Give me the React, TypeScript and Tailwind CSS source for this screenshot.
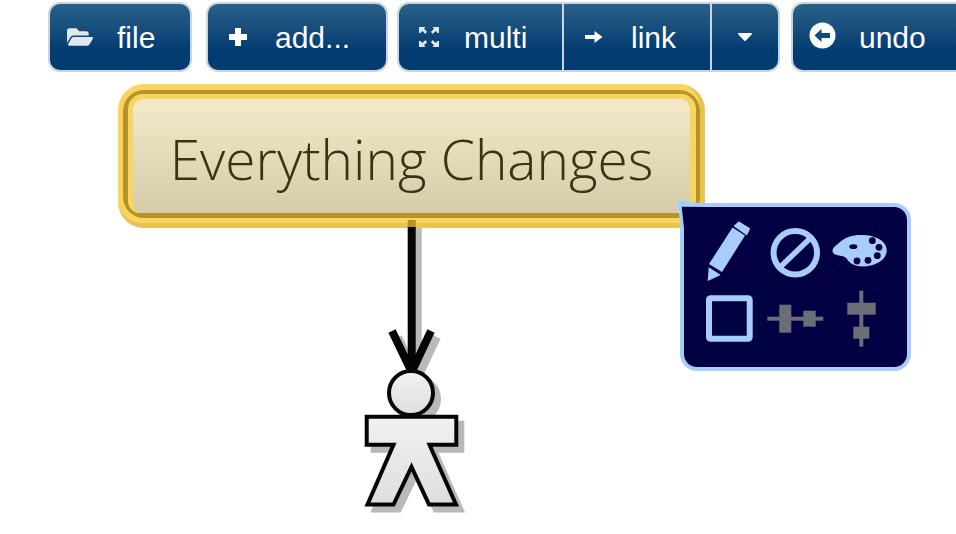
import { FaCaretDown, FaFolderOpen } from 'react-icons/fa';

const barClass =
  'h-[70px] shrink-0 flex rounded-[12px] border-2 border-[#c9d5e0] bg-gradient-to-b from-[#2a6188] to-[#033c71] to-70% text-white text-[30px] overflow-hidden';

function MultiIcon() {
  return (
    <svg width="20" height="20" viewBox="0 0 20 20" fill="#dfe8ee">
      <path d="M0 0h6.5L5 1.7 8 4.7 6.5 7 3.2 4 1.5 6H0z" />
      <path d="M20 0h-6.5L15 1.7 12 4.7 13.5 7 16.8 4 18.5 6H20z" />
      <path d="M0 20h6.5L5 18.3 8 15.3 6.5 13 3.2 16 1.5 14H0z" />
      <path d="M20 20h-6.5L15 18.3 12 15.3 13.5 13 16.8 16 18.5 14H20z" />
    </svg>
  );
}

function PlusIcon() {
  return (
    <svg width="18" height="18" viewBox="0 0 18 18" fill="#fff">
      <path d="M6 0H12V6H18V12H12V18H6V12H0V6H6Z" />
    </svg>
  );
}

function ArrowIcon() {
  return (
    <svg width="18" height="14" viewBox="0 0 18 14" fill="#fff">
      <path d="M0 5H9.5V1L17.5 7L9.5 13V9H0Z" />
    </svg>
  );
}

function UndoIcon() {
  return (
    <svg width="27" height="27" viewBox="0 0 27 27">
      <circle cx="13.5" cy="13.5" r="13" fill="#fff" />
      <path d="M5.5 13.5L12.5 7V11H21V16H12.5V20Z" fill="#0f4a7c" />
    </svg>
  );
}

function PersonShape({ fill, stroke, lineTop }: { fill: string; stroke: string; lineTop: number }) {
  return (
    <>
      <path d={`M46.7 ${lineTop}V144M27 103L46.7 144L66 103`} fill="none" stroke={stroke} strokeWidth="8" />
      <circle cx="46" cy="165" r="22" fill={fill} stroke={stroke} strokeWidth="4" />
      <path
        d="M1.7 188.7H91.3V216.7H64.5L91 276.5H64L46.5 239L28.5 276.5H2.5L28.5 216.7H1.7Z"
        fill={fill}
        stroke={stroke}
        strokeWidth="4"
      />
    </>
  );
}

function Person() {
  return (
    <svg className="absolute left-[365px] top-[228px] overflow-visible" width="100" height="290" viewBox="0 0 100 290">
      <defs>
        <linearGradient id="personFill" x1="0" y1="0" x2="0" y2="1">
          <stop offset="0" stopColor="#f1f1f1" />
          <stop offset="1" stopColor="#dedede" />
        </linearGradient>
      </defs>
      <g transform="translate(6 6)">
        <PersonShape fill="#b9b9b9" stroke="#b9b9b9" lineTop={-6} />
      </g>
      <rect x="42.7" y="-8" width="8" height="8" fill="#b69329" />
      <PersonShape fill="url(#personFill)" stroke="#050505" lineTop={-1} />
    </svg>
  );
}

function Popover() {
  return (
    <div className="absolute left-[680px] top-[203px] w-[231px] h-[168px] rounded-[17px] border-4 border-[#a9cdfb] bg-[#000042] p-3">
      <svg className="absolute left-[-7px] top-[-7px]" width="30" height="30" viewBox="0 0 30 30">
        <path d="M0.3 0L24 3.5V7H8V22H3Z" fill="#a9cdfb" />
        <path d="M4.7 6.7L30 7V30H7.2Z" fill="#000042" />
      </svg>
      <div className="relative grid grid-cols-[66px_66px_66px] grid-rows-[67px_66px]">
        <svg width="66" height="66" viewBox="0 0 66 66" fill="#a9cdfb">
          <path d="M11.7 62L12.7 48.3L24.7 56Z" />
          <path d="M13 45L36.5 8.5L49 16.5L26 53Z" />
          <path d="M39 7L43 3.5L53 9.8L50.5 15Z" stroke="#a9cdfb" strokeWidth="2" strokeLinejoin="round" />
        </svg>
        <svg width="66" height="66" viewBox="0 0 66 66" fill="none" stroke="#a9cdfb">
          <circle cx="33.3" cy="33.7" r="21.7" strokeWidth="6" />
          <path d="M49.7 17.7L17 49.3" strokeWidth="5.5" />
        </svg>
        <svg width="66" height="66" viewBox="0 0 66 66" fill="#a9cdfb">
          <path d="M4.5 31.5C5 28 9 26 12 23C17 18.5 24 16 33 16C48 16 58.7 22 58.7 31.5C58.7 41 47 47.5 35 47.5C27 47.5 21 44 19 40C17 37.5 15 37 11 36.5C8 36 4.5 35 4.5 31.5Z" />
          <g fill="#000042">
            <ellipse cx="25.3" cy="27.7" rx="4" ry="2.4" />
            <circle cx="44.3" cy="21.7" r="3.4" />
            <circle cx="51" cy="28.3" r="3.4" />
            <circle cx="49.3" cy="36.7" r="3.4" />
            <circle cx="40" cy="41.3" r="3.4" />
            <circle cx="29" cy="42" r="3.4" />
          </g>
        </svg>
        <svg width="66" height="66" viewBox="0 0 66 66" fill="none" stroke="#a9cdfb">
          <rect x="13" y="12.3" width="40.7" height="40.4" rx="1.5" strokeWidth="6" />
        </svg>
        <svg width="66" height="66" viewBox="0 0 66 66" fill="#6d6d77">
          <rect x="5.3" y="30.7" width="56" height="4" />
          <rect x="17.3" y="18.7" width="12" height="28" />
          <rect x="41.3" y="24.7" width="12.4" height="16" />
        </svg>
        <svg width="66" height="66" viewBox="0 0 66 66" fill="#6d6d77">
          <rect x="31.3" y="4.7" width="4" height="56" />
          <rect x="19.3" y="16.7" width="28.4" height="12" />
          <rect x="25.3" y="40.7" width="16" height="12" />
        </svg>
      </div>
    </div>
  );
}

export default function App() {
  return (
    <div className="relative w-[956px] h-[534px] overflow-hidden bg-white font-['Liberation_Sans',Arial,sans-serif]">
      <div className="flex pl-[48px] pt-[2px]">
        <div className={barClass + ' w-[144px] mr-[14px]'}>
          <div className="flex items-center pl-[17px]">
            <span className="w-[50px]"><FaFolderOpen className="w-[26px] h-[26px] text-[#dfe8ee]" /></span>
            <span className="pt-[1px]">file</span>
          </div>
        </div>
        <div className={barClass + ' w-[182px] mr-[9px]'}>
          <div className="flex items-center pl-[21px]">
            <span className="w-[46px]"><PlusIcon /></span>
            <span className="pt-[1px]">add...</span>
          </div>
        </div>
        <div className={barClass + ' w-[383px] mr-[11px]'}>
          <div className="w-[165px] flex items-center pl-[20px] border-r-2 border-[#c9d5e0]">
            <span className="w-[45px]"><MultiIcon /></span>
            <span className="pt-[1px]">multi</span>
          </div>
          <div className="w-[148px] flex items-center pl-[21px] border-r-2 border-[#c9d5e0]">
            <span className="w-[46px]"><ArrowIcon /></span>
            <span className="pt-[1px]">link</span>
          </div>
          <div className="flex-1 flex items-center justify-center pb-[2px]">
            <FaCaretDown className="w-[24px] h-[24px]" />
          </div>
        </div>
        <div className={barClass + ' w-[190px]'}>
          <div className="flex items-center pl-[16px]">
            <span className="w-[50px] pb-[3px]"><UndoIcon /></span>
            <span className="pt-[1px]">undo</span>
          </div>
        </div>
      </div>

      <div className="absolute left-[118px] top-[84px] w-[587px] h-[144px] rounded-[26px] bg-[#fad45f] border-b-[5px] border-r-[5px] border-[#e8c253] pl-[5px] pt-[6px]">
        <div className="w-[577px] h-[128px] rounded-[21px] border-x-[5px] border-t-[4px] border-b-[5px] border-r-[4px] border-[#b69329] bg-[#fad45f]">
          <div className="h-[119px] rounded-[15px] rounded-b-[12px] border-l-[5px] border-r-[6px] border-t-[5px] border-[#f8d463] bg-gradient-to-b from-[#f3e8c9] to-[#d6cba9] flex items-center justify-center">
            <span className="font-['Open_Sans',sans-serif] font-light text-[55px] leading-none text-[#3d3110] pt-[5px]">Everything Changes</span>
          </div>
        </div>
      </div>

      <Person />
      <Popover />
    </div>
  );
}
